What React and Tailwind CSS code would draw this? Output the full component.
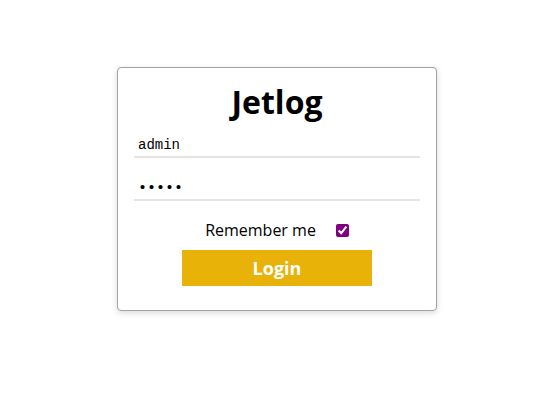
export default function App() {
    return (
        <div className="min-h-[407px] bg-white pt-[67px] pl-[117px]" style={{ fontFamily: '"Open Sans", "Noto Sans", sans-serif' }}>
            <div className="w-[320px] h-[244px] border border-[#a3a3a3] rounded-[4px] shadow-[0_2px_6px_rgba(0,0,0,0.15)] bg-white px-4 pt-[14px]">
                <h1 className="text-center text-[32px] leading-[40px] font-bold text-black">Jetlog</h1>
                <div>
                    <input
                        type="text"
                        defaultValue="admin"
                        className="w-full h-[36px] px-1 pt-[12px] border-b-2 border-[#e4e4e4] outline-none text-[14px] text-black"
                        style={{ fontFamily: '"Liberation Mono", "DejaVu Sans Mono", monospace' }}
                    />
                    <input
                        type="password"
                        defaultValue="admin"
                        className="mt-[7px] w-full h-[36px] px-1 pt-[12px] border-b-2 border-[#e4e4e4] outline-none text-[15px] text-black"
                        style={{ fontFamily: '"Liberation Mono", "DejaVu Sans Mono", monospace' }}
                    />
                </div>
                <div className="mt-[17px] flex items-center justify-center gap-[20px]">
                    <span className="text-[16px] text-black">Remember me</span>
                    <input type="checkbox" defaultChecked className="w-[13px] h-[13px] accent-[#800080]" />
                </div>
                <div className="mt-[8px] flex justify-center">
                    <button className="w-[190px] h-[36px] bg-[#e8b209] text-white text-[18px] font-bold">Login</button>
                </div>
            </div>
        </div>
    );
}
